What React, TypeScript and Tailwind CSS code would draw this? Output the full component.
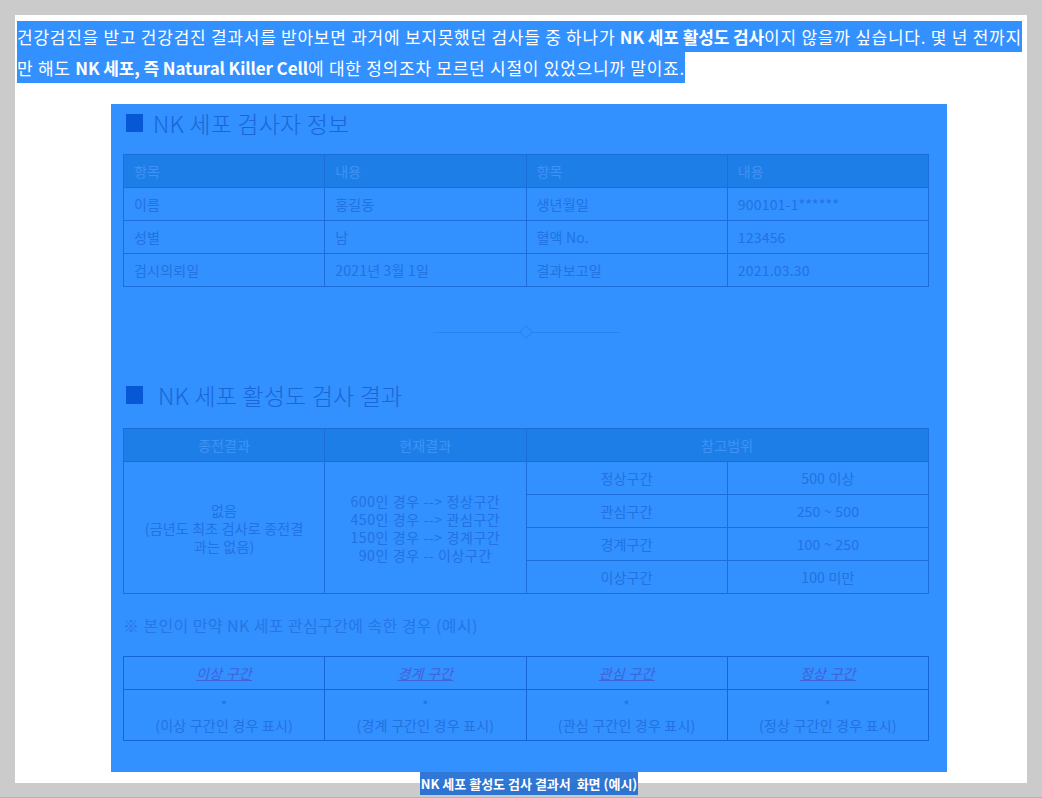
const KR = "font-['Noto_Sans_CJK_KR','Noto_Sans',sans-serif]";

const infoRows = [
  ['이름', '홍길동', '생년월일', '900101-1******'],
  ['성별', '남', '혈액 No.', '123456'],
  ['검시의뢰일', '2021년 3월 1일', '결과보고일', '2021.03.30'],
];

const ranges = [
  ['정상구간', '500 이상'],
  ['관심구간', '250 ~ 500'],
  ['경계구간', '100 ~ 250'],
  ['이상구간', '100 미만'],
];

const zones = ['이상', '경계', '관심', '정상'];

function SectionTitle({ text, gap }: { text: string; gap: string }) {
  return (
    <div className={`flex items-center pl-[3px] ${gap}`}>
      <span className="h-[18px] w-[17px] bg-[#0658d4]" />
      <span className="text-[23px] leading-[30px] font-light text-[#1967d6]">{text}</span>
    </div>
  );
}

export default function App() {
  const cell = 'border border-[#1c6cda]';
  return (
    <div className={`h-[798px] overflow-hidden border-b border-[#b3b3b3] bg-[#cbcbcb] px-[15px] pt-[15px] ${KR}`}>
      <div className="h-[768px] bg-white pl-[2px] pt-[6px]">
        {/* selected intro paragraph */}
        <p className="text-[17px] leading-[31px] tracking-[0.75px] text-white">
          <span className="bg-[#3390ff] py-[3.2px]">
            건강검진을 받고 건강검진 결과서를 받아보면 과거에 보지못했던 검사들 중 하나가{' '}
            <b className="tracking-[-0.1px]">NK 세포 활성도 검사</b>이지 않을까 싶습니다. 몇 년 전까지
            <br />
            만 해도 <b className="tracking-[-0.1px]">NK 세포, 즉 Natural Killer Cell</b>에 대한 정의조차
            모르던 시절이 있었으니까 말이죠.
          </span>
        </p>

        <div className="mt-[21px] flex flex-col items-center pl-[14px]">
          {/* result sheet image (selected) */}
          <div className="h-[668px] w-[836px] bg-[#3390ff] pl-[12px] pr-[18px] pt-[4px] text-[14px] tracking-[0.2px] text-[#2272df]">
            <SectionTitle text="NK 세포 검사자 정보" gap="gap-[10px]" />

            <table className="mt-[16px] w-[806px] table-fixed border-collapse border border-[#1a69d8]">
              <thead>
                <tr className="h-[33px] bg-[#1e7ee8] text-left text-[#3f92f5]">
                  {['항목', '내용', '항목', '내용'].map((h, i) => (
                    <th key={i} className={`${cell} px-[10px] font-normal`}>
                      {h}
                    </th>
                  ))}
                </tr>
              </thead>
              <tbody>
                {infoRows.map((r) => (
                  <tr key={r[0]} className="h-[33px]">
                    {r.map((c, i) => (
                      <td key={i} className={`${cell} px-[10px]`}>
                        {c}
                      </td>
                    ))}
                  </tr>
                ))}
              </tbody>
            </table>

            {/* divider */}
            <div className="mt-[40px] flex items-center justify-center">
              <span className="h-px w-[88px] bg-[#2a82ec]" />
              <span className="h-[10px] w-[10px] rotate-45 border border-[#2a82ec]" />
              <span className="h-px w-[88px] bg-[#2a82ec]" />
            </div>

            <div className="mt-[43px]">
              <SectionTitle text="NK 세포 활성도 검사 결과" gap="gap-[15px]" />
            </div>

            <table className="mt-[18px] w-[806px] table-fixed border-collapse border border-[#1a69d8] text-center">
              <thead>
                <tr className="h-[33px] bg-[#1e7ee8] text-[#3f92f5]">
                  <th className={`${cell} font-normal`}>종전결과</th>
                  <th className={`${cell} font-normal`}>현재결과</th>
                  <th colSpan={2} className={`${cell} font-normal`}>
                    참고범위
                  </th>
                </tr>
              </thead>
              <tbody>
                {ranges.map((r, i) => (
                  <tr key={r[0]} className="h-[33px]">
                    {i === 0 && (
                      <>
                        <td rowSpan={4} className={`${cell} leading-[18px]`}>
                          없음
                          <br />
                          (금년도 최초 검사로 종전결
                          <br />
                          과는 없음)
                        </td>
                        <td rowSpan={4} className={`${cell} leading-[18px] tracking-[0.6px]`}>
                          600인 경우 --&gt; 정상구간
                          <br />
                          450인 경우 --&gt; 관심구간
                          <br />
                          150인 경우 --&gt; 경계구간
                          <br />
                          90인 경우 -- 이상구간
                        </td>
                      </>
                    )}
                    <td className={cell}>{r[0]}</td>
                    <td className={cell}>{r[1]}</td>
                  </tr>
                ))}
              </tbody>
            </table>

            <p className="mt-[20px] text-[16px] leading-[22px] tracking-[0.4px] text-[#2676e4]">
              ※ 본인이 만약 NK 세포 관심구간에 속한 경우 (예시)
            </p>

            <table className="mt-[20px] w-[806px] table-fixed border-collapse border border-[#1665d8] text-center">
              <thead>
                <tr className="h-[33px]">
                  {zones.map((z) => (
                    <th key={z} className="border border-[#1665d8] font-normal italic text-[#4162d8] underline">
                      {z} 구간
                    </th>
                  ))}
                </tr>
              </thead>
              <tbody>
                <tr className="h-[51px]">
                  {zones.map((z) => (
                    <td key={z} className="border border-[#1665d8] leading-[20px]">
                      *
                      <br />({z} 구간인 경우 표시)
                    </td>
                  ))}
                </tr>
              </tbody>
            </table>
          </div>

          {/* caption */}
          <div className="bg-[#1e6bd3]/[0.92] px-[1px] text-[13px] leading-[23px] font-bold text-white">
            NK 세포 활성도 검사 결과서&nbsp; 화면 (예시)
          </div>
        </div>
      </div>
    </div>
  );
}
